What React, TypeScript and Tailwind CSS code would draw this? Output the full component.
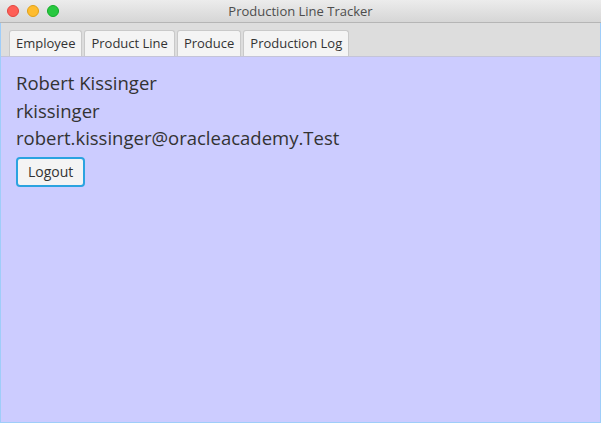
const tabs = ["Employee", "Product Line", "Produce", "Production Log"];

function App() {
  return (
    <div className="flex h-[423px] w-[601px] flex-col overflow-hidden bg-[#ccccff] font-['Open_Sans',sans-serif]">
      {/* title bar */}
      <div className="relative flex h-[23px] shrink-0 items-center justify-center border-b border-[#b5b5b5] bg-gradient-to-b from-[#ececec] to-[#d6d6d6]">
        <div className="absolute left-[7px] top-[5px] flex gap-[8px]">
          <span className="h-[12px] w-[12px] rounded-full border border-[#e2463f] bg-[#fe5f57]" />
          <span className="h-[12px] w-[12px] rounded-full border border-[#e1a116] bg-[#febc2e]" />
          <span className="h-[12px] w-[12px] rounded-full border border-[#12ac28] bg-[#28c840]" />
        </div>
        <span className="text-[13px] leading-none text-[#4d4d4d]">Production Line Tracker</span>
      </div>

      <div className="flex flex-1 flex-col border-x border-b border-[#9fcdf9]">
        {/* tab header */}
        <div className="flex h-[34px] shrink-0 items-end gap-[2px] border-b border-[#c4c4d8] bg-[#dddddd] pl-[8px]">
          {tabs.map((t) => (
            <div
              key={t}
              className="flex h-[26px] items-center rounded-t-[3px] border border-b-0 border-[#c9c9c9] bg-[#f4f4f4] px-[6px] text-[13px] text-[#333333]"
            >
              {t}
            </div>
          ))}
        </div>

        {/* content */}
        <div className="flex flex-col items-start px-[15px] pt-[12px] text-[18.5px] leading-[27.5px] text-[#333333]">
          <p>Robert Kissinger</p>
          <p>rkissinger</p>
          <p>robert.kissinger@oracleacademy.Test</p>
          <button className="mt-[5px] h-[30px] rounded-[4px] border-2 border-[#2ba3e0] bg-[#f4f4f4] px-[10px] text-[14px] leading-none text-[#333333]">
            Logout
          </button>
        </div>
      </div>
    </div>
  );
}

export default App;
